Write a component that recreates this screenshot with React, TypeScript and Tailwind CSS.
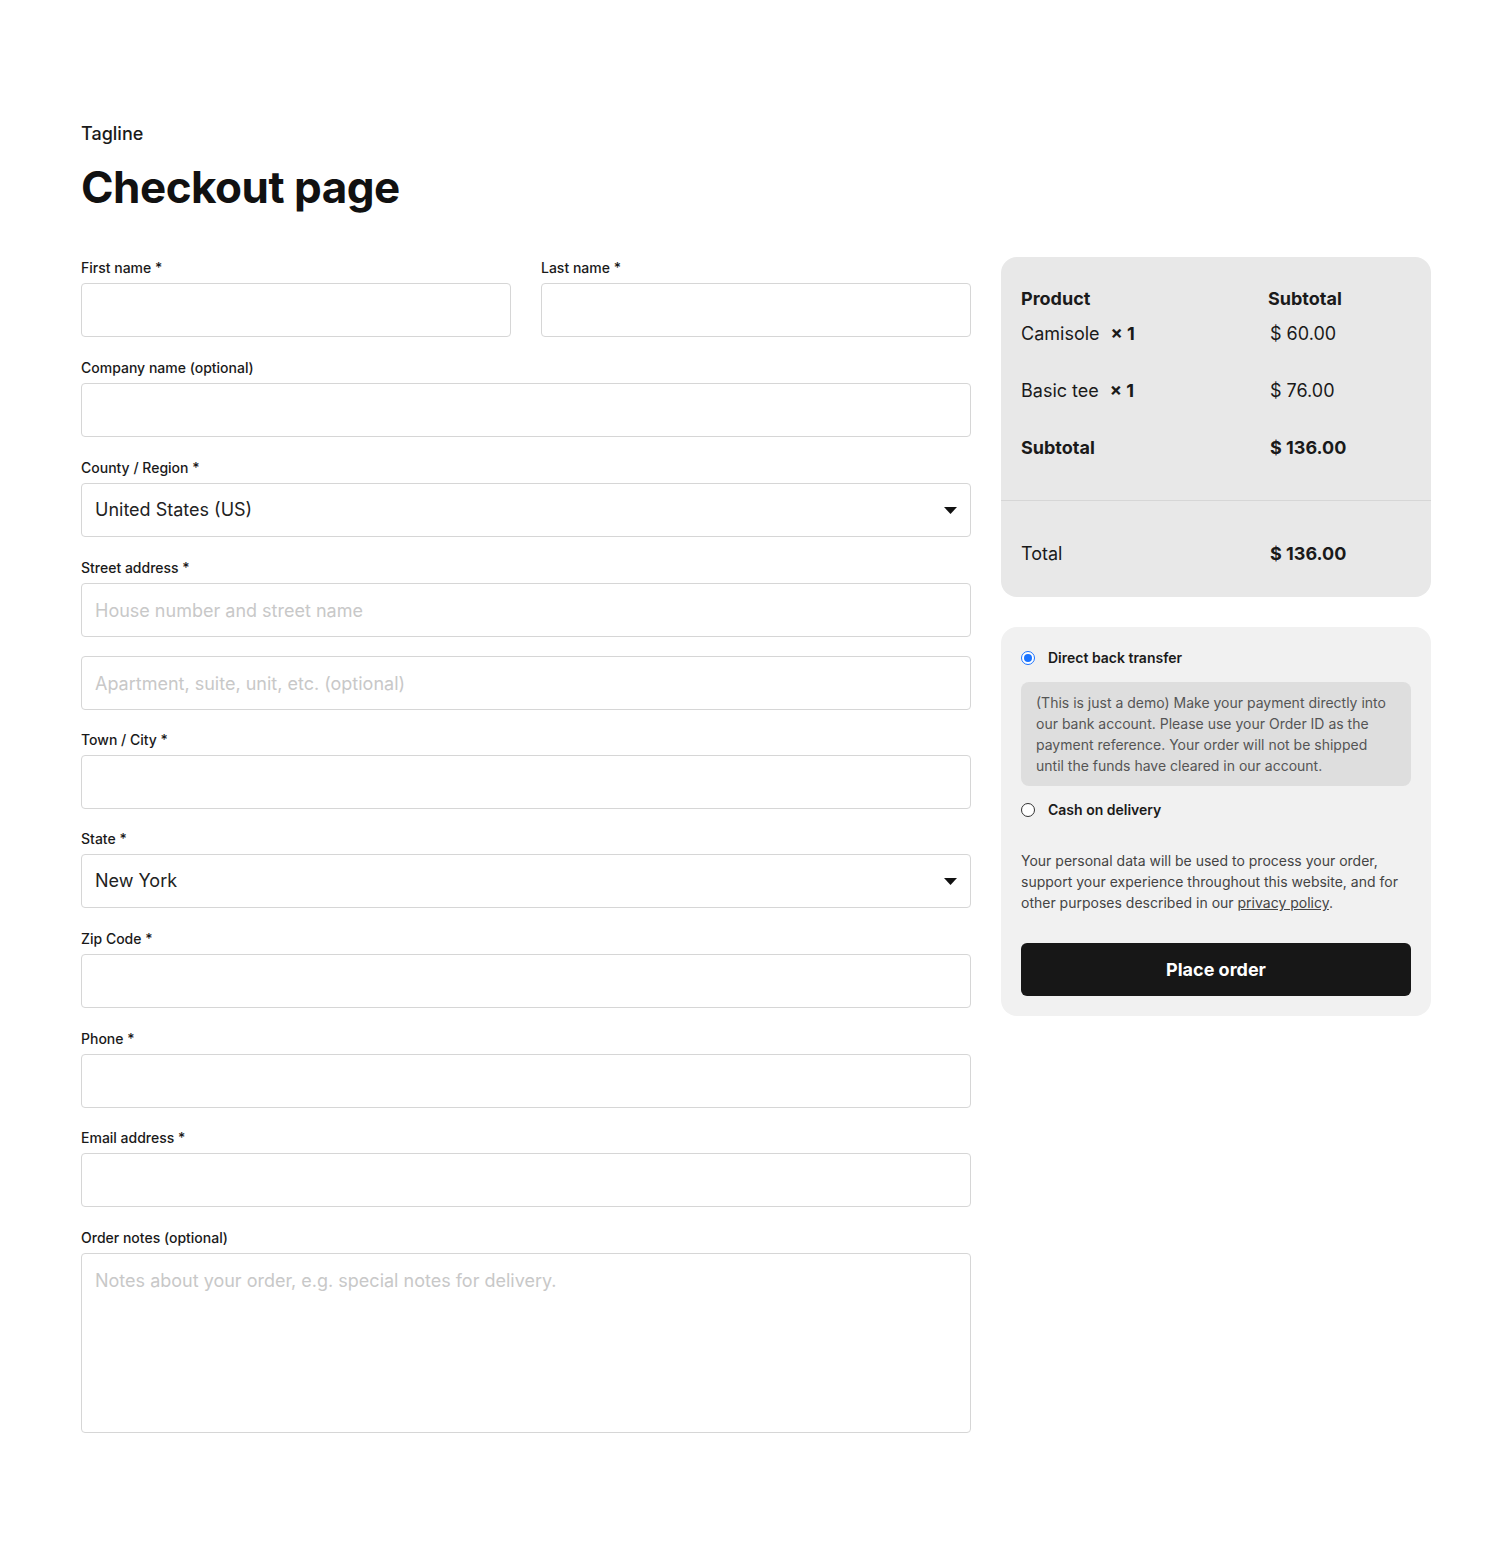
import React from "react";

function Label({ children }: { children: React.ReactNode }) {
  return <label className="block text-[14px] leading-[20px] font-medium text-[#1a1a1a]">{children}</label>;
}

function Input({ placeholder }: { placeholder?: string }) {
  return (
    <input
      placeholder={placeholder}
      className="mt-[5px] block w-full h-[54px] rounded-[4px] border border-[#d6d6d6] bg-white px-[13px] text-[18px] text-[#222] placeholder:text-[#c8c8c8] outline-none"
    />
  );
}

function Select({ value }: { value: string }) {
  return (
    <div className="mt-[5px] flex h-[54px] w-full items-center justify-between rounded-[4px] border border-[#d6d6d6] bg-white pl-[13px] pr-[13px]">
      <span className="text-[18px] text-[#222] -translate-y-[1px]">{value}</span>
      <svg width="13" height="7" viewBox="0 0 13 7"><path d="M0 0 H13 L6.5 7 Z" fill="#111" /></svg>
    </div>
  );
}

function Field({ label, placeholder }: { label: string; placeholder?: string }) {
  return (
    <div>
      <Label>{label}</Label>
      <Input placeholder={placeholder} />
    </div>
  );
}

function Radio({ checked }: { checked?: boolean }) {
  return checked ? (
    <span className="flex h-[14px] w-[14px] items-center justify-center rounded-full border-[1.5px] border-[#1a73ff] bg-white">
      <span className="h-[8px] w-[8px] rounded-full bg-[#1a73ff]" />
    </span>
  ) : (
    <span className="h-[14px] w-[14px] rounded-full border border-[#333] bg-white" />
  );
}

export default function App() {
  return (
    <div className="min-h-[1554px] bg-white px-[81px] pt-[120px] text-[#1a1a1a]" style={{ fontFamily: "Inter, 'Noto Sans', sans-serif" }}>
      <p className="text-[18px] leading-[27px] font-medium">Tagline</p>
      <h1 className="mt-[11px] text-[44px] leading-[58px] font-bold tracking-[-0.5px] text-[#111]">Checkout page</h1>
      <div className="mt-[41px] flex gap-[30px]">
        <div className="w-[890px] flex flex-col pt-[1px]">
          <div className="grid grid-cols-2 gap-[30px]">
            <Field label="First name *" />
            <Field label="Last name *" />
          </div>
          <div className="mt-[21px]"><Field label="Company name (optional)" /></div>
          <div className="mt-[21px]">
            <Label>County / Region *</Label>
            <Select value="United States (US)" />
          </div>
          <div className="mt-[21px]">
            <Label>Street address *</Label>
            <Input placeholder="House number and street name" />
            <div className="h-[14px]" />
            <Input placeholder="Apartment, suite, unit, etc. (optional)" />
          </div>
          <div className="mt-[20px]"><Field label="Town / City *" /></div>
          <div className="mt-[20px]">
            <Label>State *</Label>
            <Select value="New York" />
          </div>
          <div className="mt-[21px]"><Field label="Zip Code *" /></div>
          <div className="mt-[21px]"><Field label="Phone *" /></div>
          <div className="mt-[20px]"><Field label="Email address *" /></div>
          <div className="mt-[21px]">
            <Label>Order notes (optional)</Label>
            <textarea
              placeholder="Notes about your order, e.g. special notes for delivery."
              className="mt-[5px] block w-full h-[180px] resize-none rounded-[4px] border border-[#d6d6d6] bg-white px-[13px] pt-[13px] text-[18px] leading-[27px] text-[#222] placeholder:text-[#c8c8c8] outline-none"
            />
          </div>
        </div>
        <div className="w-[430px] flex flex-col gap-[30px]">
          <div className="rounded-[16px] bg-[#e8e8e8]">
            <div className="px-[20px] pt-[28px] pb-[39px] text-[18px] leading-[27px]">
              <div className="grid grid-cols-[247px_1fr] font-bold">
                <span>Product</span>
                <span>Subtotal</span>
              </div>
              <div className="mt-[8px] grid grid-cols-[247px_1fr]">
                <span>Camisole <b className="ml-[6px]">× 1</b></span>
                <span className="pl-[2px]">$ 60.00</span>
              </div>
              <div className="mt-[30px] grid grid-cols-[247px_1fr]">
                <span>Basic tee <b className="ml-[6px]">× 1</b></span>
                <span className="pl-[2px]">$ 76.00</span>
              </div>
              <div className="mt-[30px] grid grid-cols-[247px_1fr] font-bold">
                <span>Subtotal</span>
                <span className="pl-[2px]">$ 136.00</span>
              </div>
            </div>
            <div className="border-t border-[#d6d6d6] px-[20px] pt-[39px] pb-[30px] text-[18px] leading-[27px]">
              <div className="grid grid-cols-[247px_1fr]">
                <span>Total</span>
                <span className="pl-[2px] font-bold">$ 136.00</span>
              </div>
            </div>
          </div>
          <div className="rounded-[16px] bg-[#f1f1f1] px-[20px] pt-[20px] pb-[20px]">
            <div className="flex items-center gap-[13px] text-[14px] leading-[21px] font-semibold">
              <Radio checked />
              <span>Direct back transfer</span>
            </div>
            <div className="mt-[14px] rounded-[8px] bg-[#dedede] px-[15px] py-[10px] text-[14px] leading-[21px] text-[#555]">
              (This is just a demo) Make your payment directly into our bank account. Please use your Order ID as the payment reference. Your order will not be shipped until the funds have cleared in our account.
            </div>
            <div className="mt-[13px] flex items-center gap-[13px] text-[14px] leading-[21px] font-semibold">
              <Radio />
              <span>Cash on delivery</span>
            </div>
            <p className="mt-[30px] text-[14px] leading-[21px] text-[#444]">
              Your personal data will be used to process your order, support your experience throughout this website, and for other purposes described in our <span className="underline">privacy policy</span>.
            </p>
            <button className="mt-[30px] flex h-[53px] w-full items-center justify-center rounded-[6px] bg-[#171717] text-[18px] font-bold text-white">
              Place order
            </button>
          </div>
        </div>
      </div>
    </div>
  );
}
